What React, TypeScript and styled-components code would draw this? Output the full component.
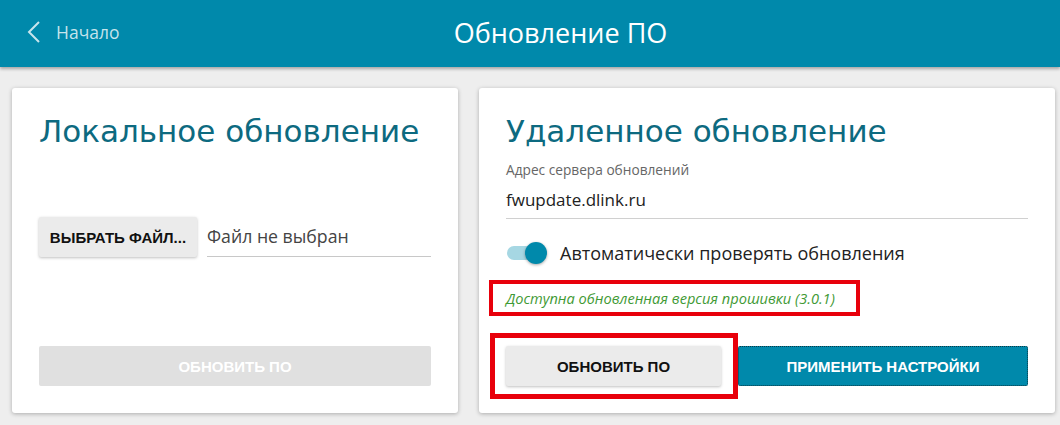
import React from "react";
import styled, { createGlobalStyle } from "styled-components";

const Global = createGlobalStyle`
  html, body { margin: 0; padding: 0; background: #eeeeee; }
  body { font-family: "Open Sans", "Noto Sans", sans-serif; width: 1060px; height: 425px; overflow: hidden; }
  * { box-sizing: border-box; }
`;

const Header = styled.header`
  position: relative;
  z-index: 2;
  height: 67px;
  background: #0089ab;
  box-shadow: 0 2px 3px rgba(0, 0, 0, 0.3);
  display: grid;
  grid-template-columns: 1fr auto 1fr;
  align-items: center;
  padding: 0 0 3px 27px;
`;

const Back = styled.div`
  display: flex;
  align-items: center;
  gap: 15px;
  color: rgba(255, 255, 255, 0.78);
  font-size: 17.5px;
`;

const Title = styled.h1`
  margin: 0;
  padding-left: 34px;
  color: #ffffff;
  font-weight: 400;
  font-size: 27px;
  font-family: "Open Sans", sans-serif;
`;

const Main = styled.main`
  display: flex;
  gap: 21px;
  padding: 21px 0 0 12px;
`;

const Card = styled.section<{ $w: number }>`
  position: relative;
  width: ${(p) => p.$w}px;
  height: 325px;
  background: #fff;
  border-radius: 3px;
  box-shadow: 0 1px 4px rgba(0, 0, 0, 0.28);
  padding: 25px 27px 27px;
  display: flex;
  flex-direction: column;
`;

const CardTitle = styled.h2`
  margin: 0;
  font-family: "DejaVu Sans", sans-serif;
  font-weight: 400;
  font-size: 31px;
  line-height: 36px;
  color: #0d6a80;
  white-space: nowrap;
`;

const FileRow = styled.div`
  display: flex;
  align-items: flex-end;
  gap: 10px;
  margin-top: 68px;
`;

const GreyButton = styled.button<{ $w?: number }>`
  height: 40px;
  width: ${(p) => (p.$w ? `${p.$w}px` : "auto")};
  padding: 0 8px;
  border: none;
  border-radius: 2px;
  background: #ebebeb;
  box-shadow: 0 1px 3px rgba(0, 0, 0, 0.25);
  font-family: "Liberation Sans", Arial, sans-serif;
  font-weight: 700;
  font-size: 15px;
  color: #111;
  white-space: nowrap;
`;

const FileName = styled.div`
  flex: 1;
  border-bottom: 1px solid #c8c8c8;
  padding-bottom: 8px;
  font-size: 17.7px;
  color: #444;
  line-height: 23px;
`;

const Spacer = styled.div`
  flex: 1;
`;

const WideButton = styled.button`
  height: 40px;
  width: 100%;
  border: none;
  border-radius: 2px;
  background: #e0e0e0;
  color: #fff;
  font-family: "Liberation Sans", Arial, sans-serif;
  font-weight: 700;
  font-size: 15px;
`;

const FieldLabel = styled.div`
  margin-top: 12px;
  font-size: 13.7px;
  line-height: 18px;
  color: #666;
`;

const FieldValue = styled.div`
  margin-top: 9px;
  padding-bottom: 7px;
  border-bottom: 1px solid #d0d0d0;
  font-size: 17px;
  line-height: 23px;
  color: #222;
`;

const ToggleRow = styled.div`
  display: flex;
  align-items: center;
  gap: 15px;
  margin-top: 22px;
  font-size: 18px;
  color: #222;
`;

const Track = styled.div`
  position: relative;
  width: 38px;
  height: 14px;
  border-radius: 7px;
  background: #a6d7e3;
  margin-left: 1px;
`;

const Thumb = styled.div`
  position: absolute;
  right: -2px;
  top: -4px;
  width: 22px;
  height: 22px;
  border-radius: 50%;
  background: #0089ab;
  box-shadow: 0 1px 3px rgba(0, 0, 0, 0.35);
`;

const Notice = styled.div`
  margin-top: 23px;
  font-size: 14.6px;
  font-style: italic;
  color: #3f9a35;
`;

const ButtonRow = styled.div`
  display: flex;
  gap: 17px;
  margin-top: auto;
`;

const PrimaryButton = styled.button`
  flex: 1;
  height: 40px;
  border: 1px dotted #0b3a47;
  border-radius: 2px;
  background: #0089ab;
  color: #fff;
  font-family: "Liberation Sans", Arial, sans-serif;
  font-weight: 700;
  font-size: 15px;
`;

const Highlight = styled.div<{ $x: number; $y: number; $w: number; $h: number; $b: number }>`
  position: absolute;
  left: ${(p) => p.$x}px;
  top: ${(p) => p.$y}px;
  width: ${(p) => p.$w}px;
  height: ${(p) => p.$h}px;
  border: ${(p) => p.$b}px solid #e8000b;
  pointer-events: none;
`;

export default function App() {
  return (
    <>
      <Global />
      <Header>
        <Back>
          <svg width="14" height="24" viewBox="0 0 14 24">
            <path d="M12 2 L2 12 L12 22" fill="none" stroke="rgba(255,255,255,0.78)" strokeWidth="2" />
          </svg>
          Начало
        </Back>
        <Title>Обновление ПО</Title>
        <div />
      </Header>
      <Main>
        <Card $w={446}>
          <CardTitle>Локальное обновление</CardTitle>
          <FileRow>
            <GreyButton $w={158}>ВЫБРАТЬ ФАЙЛ...</GreyButton>
            <FileName>Файл не выбран</FileName>
          </FileRow>
          <Spacer />
          <WideButton>ОБНОВИТЬ ПО</WideButton>
        </Card>
        <Card $w={576}>
          <CardTitle>Удаленное обновление</CardTitle>
          <FieldLabel>Адрес сервера обновлений</FieldLabel>
          <FieldValue>fwupdate.dlink.ru</FieldValue>
          <ToggleRow>
            <Track>
              <Thumb />
            </Track>
            Автоматически проверять обновления
          </ToggleRow>
          <Notice>Доступна обновленная версия прошивки (3.0.1)</Notice>
          <ButtonRow>
            <GreyButton $w={215}>ОБНОВИТЬ ПО</GreyButton>
            <PrimaryButton>ПРИМЕНИТЬ НАСТРОЙКИ</PrimaryButton>
          </ButtonRow>
          <Highlight $x={10} $y={192} $w={371} $h={36} $b={4} />
          <Highlight $x={11} $y={245} $w={248} $h={66} $b={5} />
        </Card>
      </Main>
    </>
  );
}
